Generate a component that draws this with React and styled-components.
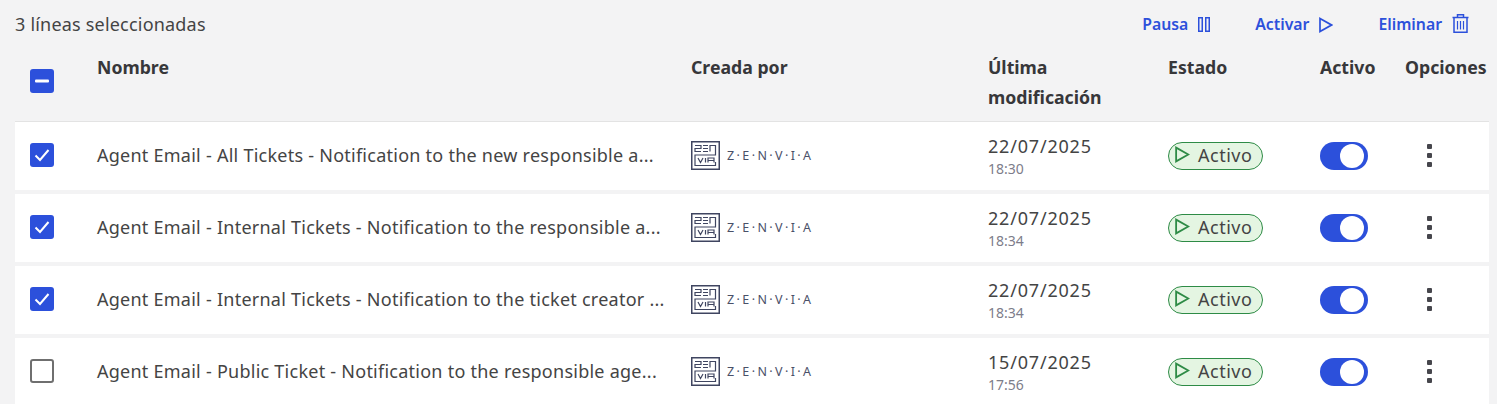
import React from 'react'
import styled, { createGlobalStyle } from 'styled-components'

const GlobalStyle = createGlobalStyle`
    html, body {
        margin: 0;
        height: 404px;
        overflow: hidden;
        background: #f3f3f4;
        font-family: "Noto Sans", "Open Sans", sans-serif;
        color: #3a3a3c;
    }
`

const COLUMNS = '82px 594px 297px 180px 152px 85px 1fr'

const Page = styled.div`
    padding: 0 8px 0 15px;
`

const TopBar = styled.div`
    display: flex;
    align-items: center;
    justify-content: space-between;
    height: 49px;
`

const SelectedCount = styled.span`
    font-size: 18px;
    letter-spacing: 0.2px;
    color: #444;
    padding-bottom: 2px;
`

const Actions = styled.div`
    display: flex;
    align-items: center;
    gap: 45px;
    padding-right: 20px;
`

const ActionLink = styled.a`
    display: inline-flex;
    align-items: center;
    gap: 10px;
    font-size: 15.8px;
    font-weight: 600;
    color: #2c50db;
`

const ActionLabel = styled.span`
    padding-bottom: 2px;
`

const HeaderRow = styled.div`
    display: grid;
    grid-template-columns: ${COLUMNS};
    height: 72px;
    border-bottom: 1px solid #e3e3e3;
`

const HeaderCell = styled.div`
    font-size: 17.7px;
    font-weight: 700;
    line-height: 30px;
    color: #37373a;
    padding: 3px 40px 0 0;
    white-space: ${p => (p.$wrap ? 'normal' : 'nowrap')};
`

const HeaderCheck = styled.div`
    padding: 20px 0 0 15px;
`

const Rows = styled.div`
    display: flex;
    flex-direction: column;
    gap: 4px;
`

const Row = styled.div`
    display: grid;
    grid-template-columns: ${COLUMNS};
    align-items: center;
    height: 68px;
    background: #fff;
`

const CheckCell = styled.div`
    padding: 0 0 2px 15px;
    display: flex;
`

const CheckBox = styled.span`
    width: 24px;
    height: 24px;
    box-sizing: border-box;
    border-radius: 3px;
    display: flex;
    align-items: center;
    justify-content: center;
    background: ${p => (p.$on ? '#2c50db' : '#fff')};
    border: ${p => (p.$on ? 'none' : '2px solid #6f6f6f')};
`

const NameCell = styled.div`
    font-size: 18px;
    letter-spacing: 0.25px;
    color: #444;
    padding-bottom: 2px;
    white-space: nowrap;
`

const Creator = styled.div`
    display: flex;
    align-items: center;
    gap: 7px;
    padding-bottom: 2px;
`

const Wordmark = styled.span`
    font-size: 12.5px;
    letter-spacing: 2.4px;
    color: #4a5068;
    white-space: nowrap;
`

const DateCell = styled.div`
    display: flex;
    flex-direction: column;
    padding-bottom: 1px;
`

const DateText = styled.span`
    font-size: 18px;
    letter-spacing: 0.8px;
    line-height: 25px;
    color: #444;
`

const TimeText = styled.span`
    font-size: 14px;
    line-height: 19px;
    color: #7d7d8a;
`

const StatusBadge = styled.span`
    display: inline-flex;
    align-items: center;
    gap: 8px;
    box-sizing: border-box;
    width: 95px;
    height: 28px;
    padding: 0 0 3px 6px;
    border: 1px solid #2e8b46;
    border-radius: 14px;
    background: #e4f5e2;
    font-size: 18px;
    letter-spacing: 0.5px;
    color: #444;
`

const ToggleTrack = styled.span`
    display: flex;
    align-items: center;
    justify-content: flex-end;
    width: 48px;
    height: 28px;
    border-radius: 14px;
    background: #2c50db;
    padding-right: 4px;
    box-sizing: border-box;
`

const ToggleKnob = styled.span`
    width: 24px;
    height: 24px;
    border-radius: 50%;
    background: #fff;
`

const Dots = styled.div`
    display: flex;
    flex-direction: column;
    gap: 4px;
    padding: 0 0 2px 22px;
`

const Dot = styled.span`
    width: 5px;
    height: 5px;
    background: #46464c;
    border-radius: 1px;
`

const PauseIcon = () => (
    <svg width="12" height="15" viewBox="0 0 12 15" fill="none" stroke="#2c50db" strokeWidth="1.5">
        <rect x="0.75" y="0.75" width="3.5" height="13.5" />
        <rect x="7.75" y="0.75" width="3.5" height="13.5" />
    </svg>
)

const PlayIcon = ({ color = '#2c50db', width = 14, height = 16 }) => (
    <svg width={width} height={height} viewBox="0 0 14 16" fill="none" stroke={color} strokeWidth="1.7">
        <path d="M1 1.5 L12.5 8 L1 14.5 Z" />
    </svg>
)

const TrashIcon = () => (
    <svg width="17" height="21" viewBox="0 0 17 21" fill="none" stroke="#2c50db" strokeWidth="1.5">
        <path d="M0.5 3.5 H16.5 M5.5 3.5 V0.75 H11.5 V3.5 M2 3.5 V18.25 H15 V3.5" />
        <path d="M5.5 7 V15.5 M8.5 7 V15.5 M11.5 7 V15.5" strokeWidth="1.2" />
    </svg>
)

const TickIcon = () => (
    <svg width="16" height="14" viewBox="0 0 16 14" fill="none" stroke="#fff" strokeWidth="2">
        <path d="M1.5 7.5 L6 12 L14.5 2" />
    </svg>
)

const MinusIcon = () => (
    <svg width="14" height="4" viewBox="0 0 14 4">
        <rect x="0" y="0.5" width="14" height="3" rx="1" fill="#fff" />
    </svg>
)

const ZenviaLogo = () => (
    <svg width="29" height="29" viewBox="0 0 29 29" fill="none" stroke="#3f4560">
        <rect x="0.75" y="0.75" width="27.5" height="27.5" strokeWidth="1.5" />
        <path d="M4 4.5 H10 V7.5 H4 V10.5 H10 M12 4.5 H17 M12 7.5 H17 M12 10.5 H17 M19 10.5 V4.5 H24.5 V14 H4 V24.5 H24.5 V21 M7 17 L9.5 21.5 L12 17 M14.5 17 V21.5 M17 21.5 V17 H23 V21.5 M17 19.5 H23" strokeWidth="1.2" />
    </svg>
)

const rows = [
    { name: 'Agent Email - All Tickets - Notification to the new responsible a...', date: '22/07/2025', time: '18:30', on: true },
    { name: 'Agent Email - Internal Tickets - Notification to the responsible a...', date: '22/07/2025', time: '18:34', on: true },
    { name: 'Agent Email - Internal Tickets - Notification to the ticket creator ...', date: '22/07/2025', time: '18:34', on: true },
    { name: 'Agent Email - Public Ticket - Notification to the responsible age...', date: '15/07/2025', time: '17:56', on: false },
]

const App = () => {
    return (
        <Page>
            <GlobalStyle />
            <TopBar>
                <SelectedCount>3 líneas seleccionadas</SelectedCount>
                <Actions>
                    <ActionLink><ActionLabel>Pausa</ActionLabel><PauseIcon /></ActionLink>
                    <ActionLink><ActionLabel>Activar</ActionLabel><PlayIcon /></ActionLink>
                    <ActionLink><ActionLabel>Eliminar</ActionLabel><TrashIcon /></ActionLink>
                </Actions>
            </TopBar>
            <HeaderRow>
                <HeaderCheck><CheckBox $on><MinusIcon /></CheckBox></HeaderCheck>
                <HeaderCell>Nombre</HeaderCell>
                <HeaderCell>Creada por</HeaderCell>
                <HeaderCell $wrap>Última modificación</HeaderCell>
                <HeaderCell>Estado</HeaderCell>
                <HeaderCell>Activo</HeaderCell>
                <HeaderCell>Opciones</HeaderCell>
            </HeaderRow>
            <Rows>
                {rows.map(row => (
                    <Row key={row.name}>
                        <CheckCell>
                            <CheckBox $on={row.on}>{row.on && <TickIcon />}</CheckBox>
                        </CheckCell>
                        <NameCell>{row.name}</NameCell>
                        <Creator>
                            <ZenviaLogo />
                            <Wordmark>Z·E·N·V·I·A</Wordmark>
                        </Creator>
                        <DateCell>
                            <DateText>{row.date}</DateText>
                            <TimeText>{row.time}</TimeText>
                        </DateCell>
                        <div>
                            <StatusBadge><PlayIcon color="#2e8b46" width={15} height={17} /> Activo</StatusBadge>
                        </div>
                        <div>
                            <ToggleTrack><ToggleKnob /></ToggleTrack>
                        </div>
                        <Dots><Dot /><Dot /><Dot /></Dots>
                    </Row>
                ))}
            </Rows>
        </Page>
    )
}

export default App
